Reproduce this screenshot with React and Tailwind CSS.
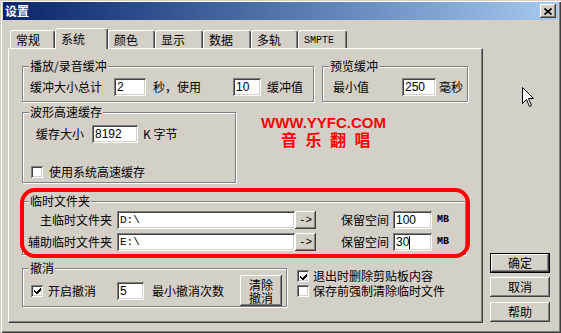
import React from "react";

const sunken =
  "bg-white shadow-[inset_1px_1px_#808080,inset_-1px_-1px_#ffffff,inset_2px_2px_#404040,inset_-2px_-2px_#d4d0c8]";
const raised =
  "bg-[#d4d0c8] shadow-[inset_-1px_-1px_#404040,inset_1px_1px_#ffffff,inset_-2px_-2px_#808080,inset_2px_2px_#d4d0c8]";

function Input({ className, value, caret, mono }) {
  return (
    <div
      className={`h-[18px] shrink-0 flex items-center pl-[3px] ${sunken} ${className} ${
        mono
          ? "font-['Liberation_Mono',monospace] text-[11px]"
          : "font-['Liberation_Sans',sans-serif] text-[12px]"
      }`}
    >
      <span>{value}</span>
      {caret && <span className="w-px h-[13px] bg-black" />}
    </div>
  );
}

function Check({ checked }) {
  return (
    <div className={`w-[12px] h-[12px] shrink-0 flex items-center justify-center ${sunken}`}>
      {checked && (
        <svg width="7" height="7" viewBox="0 0 7 7" shapeRendering="crispEdges">
          <polygon points="0,2.5 2.5,5 7,0.5 7,3 2.5,7.5 0,5" fill="#000" />
        </svg>
      )}
    </div>
  );
}

function Group({ label, className, children }) {
  return (
    <fieldset
      className={`border border-[#808080] shadow-[inset_1px_1px_#ffffff,1px_1px_#ffffff] ${className}`}
    >
      <legend className="ml-[6px] px-[1px] bg-[#d4d0c8] leading-[14px]">{label}</legend>
      {children}
    </fieldset>
  );
}

function Tab({ label, w, sel, mono }) {
  return (
    <div
      className={`${w} ${
        sel ? "h-[21px] -mb-px relative z-10 pt-[3px]" : "h-[18px] pt-[2px]"
      } shrink-0 flex items-start pl-[5px] bg-[#d4d0c8] border-l border-t border-white border-r border-r-[#404040] rounded-t-[3px] shadow-[inset_-1px_0_#808080]`}
    >
      <span className={mono ? "font-['Liberation_Mono',monospace] text-[10px] pt-[1px]" : ""}>{label}</span>
    </div>
  );
}

function PathRow({ label, path, size, caret }) {
  return (
    <div className="flex items-center h-[18px]">
      <span className="w-[89px] text-right shrink-0">{label}</span>
      <Input className="ml-[5px] w-[178px]" value={path} mono />
      <div className={`w-[21px] h-[18px] shrink-0 flex items-center justify-center ${raised} font-['Liberation_Mono',monospace] text-[11px]`}>
        -&gt;
      </div>
      <span className="ml-[25px]">保留空间</span>
      <Input className="ml-[4px] w-[39px]" value={size} caret={caret} />
      <span className="ml-[5px] font-['Liberation_Mono',monospace] text-[10px] font-bold">MB</span>
    </div>
  );
}

export default function App() {
  return (
    <div className="w-[561px] h-[333px] bg-[#d4d0c8] relative overflow-hidden flex flex-col px-[3px] pt-[2px] shadow-[inset_1px_1px_#d4d0c8,inset_2px_2px_#ffffff,inset_-1px_-1px_#404040,inset_-2px_-2px_#808080] text-black text-[12px] leading-[14px] font-['Noto_Sans_CJK_SC','Noto_Sans',sans-serif]">
      {/* title bar */}
      <div className="h-[18px] shrink-0 flex items-center justify-between pl-[2px] pr-[2px] bg-linear-to-r from-[#0a246a] to-[#a6caf0]">
        <span className="text-white font-bold">设置</span>
        <div className={`w-[16px] h-[14px] flex items-center justify-center ${raised}`}>
          <svg width="8" height="7" viewBox="0 0 8 7">
            <path d="M0.5 0.5 L7.5 6.5 M7.5 0.5 L0.5 6.5" stroke="#000" strokeWidth="1.7" />
          </svg>
        </div>
      </div>

      <div className="flex ml-[5px]">
        <div className="flex flex-col">
          {/* tabs */}
          <div className="h-[28px] flex items-end pl-[2px]">
            <Tab label="常规" w="w-[45px]" />
            <Tab label="系统" w="w-[53px]" sel />
            <Tab label="颜色" w="w-[47px]" />
            <Tab label="显示" w="w-[48px]" />
            <Tab label="数据" w="w-[48px]" />
            <Tab label="多轨" w="w-[47px]" />
            <Tab label="SMPTE" w="w-[49px]" mono />
          </div>

          {/* panel */}
          <div className="w-[475px] h-[275px] border-l border-t border-white border-r border-b border-r-[#404040] border-b-[#404040] shadow-[inset_-1px_-1px_#808080] pl-[13px] pt-[10px] flex flex-col">
            {/* row 1 */}
            <div className="flex">
              <Group label="播放/录音缓冲" className="w-[292px]">
                <div className="flex items-center pl-[7px] pt-[5px] pb-[5px]">
                  <span>缓冲大小总计</span>
                  <Input className="ml-[12px] w-[32px]" value="2" />
                  <span className="ml-[7px]">秒，使用</span>
                  <Input className="ml-[32px] w-[28px]" value="10" />
                  <span className="ml-[6px]">缓冲值</span>
                </div>
              </Group>
              <Group label="预览缓冲" className="ml-[8px] w-[146px]">
                <div className="flex items-center pl-[10px] pt-[5px] pb-[5px]">
                  <span>最小值</span>
                  <Input className="ml-[33px] w-[34px]" value="250" />
                  <span className="ml-[3px]">毫秒</span>
                </div>
              </Group>
            </div>

            {/* row 2 */}
            <div className="flex mt-[3px]">
              <Group label="波形高速缓存" className="w-[214px]">
                <div className="flex items-center pl-[13px] pt-[6px]">
                  <span>缓存大小</span>
                  <Input className="ml-[8px] w-[46px]" value="8192" />
                  <span className="ml-[5px]">K 字节</span>
                </div>
                <div className="flex items-center h-[14px] pl-[8px] mt-[22px] mb-[3px]">
                  <Check />
                  <span className="ml-[6px]">使用系统高速缓存</span>
                </div>
              </Group>
              <div className="ml-[25px] mt-[9px] flex flex-col text-[#ff0000] font-bold">
                <span className="text-[15px] leading-[17px] font-['Liberation_Sans',sans-serif]">WWW.YYFC.COM</span>
                <span className="text-[16px] leading-[16px] tracking-[8.5px] pl-[20px]">音乐翻唱</span>
              </div>
            </div>

            {/* row 3 */}
            <Group label="临时文件夹" className="mt-[11px] w-[444px]">
              <div className="flex flex-col gap-[4px] pt-[3px] pb-[3px]">
                <PathRow label="主临时文件夹" path="D:\" size="100" />
                <PathRow label="辅助临时文件夹" path="E:\" size="30" caret />
              </div>
            </Group>

            {/* row 4 */}
            <div className="flex mt-[6px]">
              <Group label="撤消" className="w-[265px]">
                <div className="flex items-center h-[31px] pl-[8px]">
                  <Check checked />
                  <span className="ml-[5px]">开启撤消</span>
                  <Input className="ml-[21px] w-[27px] h-[17px]" value="5" />
                  <span className="ml-[8px]">最小撤消次数</span>
                  <div className={`ml-[16px] w-[42px] h-[31px] flex flex-col items-center justify-center leading-[13px] ${raised}`}>
                    <span>清除</span>
                    <span>撤消</span>
                  </div>
                </div>
              </Group>
              <div className="ml-[10px] pt-[8px] flex flex-col gap-[1px]">
                <div className="flex items-center h-[14px]">
                  <Check checked />
                  <span className="ml-[4px]">退出时删除剪贴板内容</span>
                </div>
                <div className="flex items-center h-[14px]">
                  <Check />
                  <span className="ml-[4px]">保存前强制清除临时文件</span>
                </div>
              </div>
            </div>
          </div>
        </div>

        {/* right buttons */}
        <div className="ml-[7px] w-[60px] flex flex-col justify-end pb-[1px]">
          <div className="h-[20px] border border-black">
            <div className={`h-full flex items-center justify-center ${raised}`}>确定</div>
          </div>
          <div className={`mt-[4px] h-[20px] flex items-center justify-center ${raised}`}>取消</div>
          <div className={`mt-[5px] h-[20px] flex items-center justify-center ${raised}`}>帮助</div>
        </div>
      </div>

      {/* red highlight ring */}
      <div className="absolute left-[20px] top-[188px] w-[450px] h-[70px] border-[4px] border-[#ff0000] rounded-[15px] pointer-events-none" />

      {/* mouse cursor */}
      <svg className="absolute left-[522px] top-[87px]" width="13" height="21" viewBox="0 0 13 21">
        <path d="M0.5 0.5 L0.5 16.5 L4.5 12.5 L7.5 19.5 L9.5 18.5 L6.5 11.5 L11.5 11.5 Z" fill="#ffffff" stroke="#000" strokeWidth="1" />
      </svg>
    </div>
  );
}
